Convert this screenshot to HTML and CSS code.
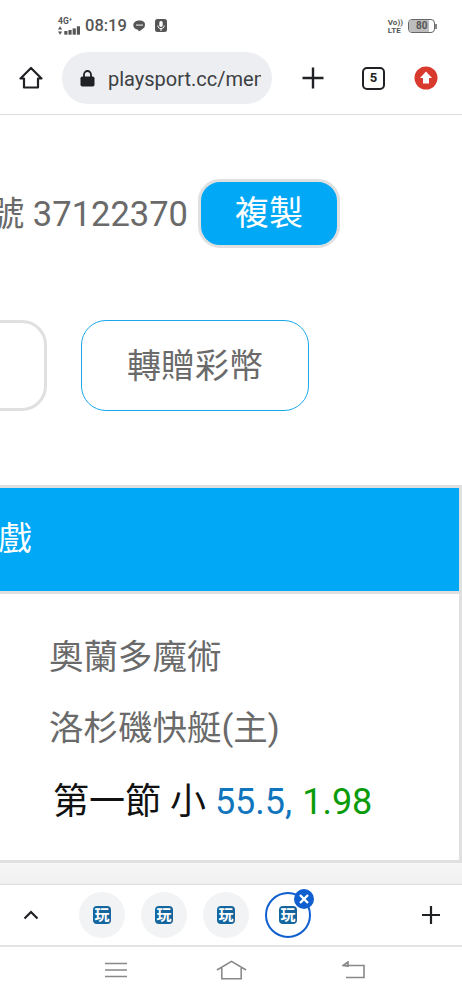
FILE: index.html
```html
<!DOCTYPE html>
<html>
<head>
    <title>playsport</title>
    <link rel="stylesheet" href="styles.css">
</head>
<body>
    <div class="status-bar">
        <div class="status-left">
            <div class="net">
                <span class="net-label">4G⁺</span>
                <svg width="22" height="9" viewBox="0 0 21 8"><path d="M2 0l2 3H0zM2 8L0 5h4z" fill="#555"/><rect x="6" y="4.500" width="3" height="3.500" fill="#555"/><rect x="10" y="3.500" width="3" height="4.500" fill="#555"/><rect x="14" y="2" width="3" height="6" fill="#555"/><rect x="18" y="0" width="3" height="8" fill="#555"/></svg>
            </div>
            <span class="clock">08:19</span>
            <svg class="line-icon" width="13" height="12" viewBox="0 0 13 12"><path d="M6.5 0.5C3 .5.3 2.6.3 5.2c0 2.3 2 4.200 4.800 4.600.5.100.3 1.200.6 1.500.4.200 3.300-1.700 4.700-3 1-.9 1.500-1.900 1.500-3.100C12.700 2.600 10 .5 6.500 .5z" fill="#555"/><rect x="3" y="4.500" width="7" height="1.200" fill="#ddd"/></svg>
            <svg class="mic-icon" width="12" height="13" viewBox="0 0 12 13"><rect width="12" height="13" rx="2.500" fill="#555"/><rect x="4.300" y="2" width="3.400" height="6" rx="1.700" fill="#fff"/><path d="M2.800 6.500c0 4.200 6.400 4.200 6.400 0M6 9.500V12" stroke="#fff" fill="none"/></svg>
        </div>
        <div class="status-right">
            <span class="volte">Vo))<br>LTE</span>
            <div class="battery"><div class="battery-fill"></div><span class="battery-num">80</span></div>
            <div class="battery-tip"></div>
        </div>
    </div>

    <div class="toolbar">
        <svg class="home-icon" width="24" height="24" viewBox="0 0 24 24"><path d="M12 2L1.500 12.500H5V21.500H19V12.500H22.500Z" fill="none" stroke="#202124" stroke-width="2.200" stroke-linejoin="round"/></svg>
        <div class="omnibox">
            <svg width="15" height="17" viewBox="0 0 15 17"><path d="M4 7V4.500a3.500 3.500 0 0 1 7 0V7" fill="none" stroke="#202124" stroke-width="1.800"/><rect x="0.500" y="6.500" width="14" height="10" rx="1.800" fill="#202124"/></svg>
            <span class="url">playsport.cc/member</span>
        </div>
        <svg class="plus-icon" width="24" height="24" viewBox="0 0 24 24"><path d="M12 1.500V22.500M1.500 12H22.500" stroke="#202124" stroke-width="2.400"/></svg>
        <div class="tab-count">5</div>
        <svg class="update-icon" width="24" height="24" viewBox="0 0 24 24"><circle cx="12" cy="12" r="11.500" fill="#d93a2e"/><path d="M12 5.500L18 12H15V17.500H9V12H6Z" fill="#fff"/></svg>
    </div>

    <div class="page">
        <div class="account-row">
            <span class="account-text">帳號 37122370</span>
            <div class="copy-btn">複製</div>
        </div>
        <div class="action-row">
            <div class="action-btn">購買彩幣</div>
            <div class="action-btn action-btn-blue">轉贈彩幣</div>
        </div>
        <div class="card">
            <div class="card-head"><span>我的遊戲</span></div>
            <div class="card-body">
                <div class="team">奧蘭多魔術</div>
                <div class="team">洛杉磯快艇(主)</div>
                <div class="bet">第一節 小 <span class="bet-line">55.5,</span><span class="bet-odds">1.98</span></div>
            </div>
        </div>
        <div class="page-foot"></div>
    </div>

    <div class="tab-strip">
        <svg class="chevron" width="16" height="10" viewBox="0 0 16 10"><path d="M1.500 8.500L8 2L14.500 8.500" fill="none" stroke="#202124" stroke-width="2.200"/></svg>
        <div class="tabs">
            <div class="tab"><span class="favicon">玩</span></div>
            <div class="tab"><span class="favicon">玩</span></div>
            <div class="tab"><span class="favicon">玩</span></div>
            <div class="tab tab-active">
                <span class="favicon">玩</span>
                <svg class="tab-close" width="20" height="20" viewBox="0 0 20 20"><circle cx="10" cy="10" r="10" fill="#0f5fd0"/><path d="M6 6L14 14M14 6L6 14" stroke="#fff" stroke-width="2.400"/></svg>
            </div>
        </div>
        <svg class="strip-plus" width="20" height="20" viewBox="0 0 20 20"><path d="M10 1V19M1 10H19" stroke="#202124" stroke-width="2.200"/></svg>
    </div>

    <div class="nav-bar">
        <svg width="22" height="16" viewBox="0 0 22 16"><path d="M0 1.500H22M0 8H22M0 14.500H22" stroke="#888" stroke-width="1.600"/></svg>
        <svg class="nav-home" width="31" height="20" viewBox="0 0 32 20"><path d="M1 10L16 1L31 10M6 8V19H26V8" fill="none" stroke="#888" stroke-width="1.600"/></svg>
        <svg class="nav-back" width="23" height="18" viewBox="0 0 23 18"><path d="M6 1L1 4.500L6 5zM4 4.500H22V16.500H4" fill="none" stroke="#888" stroke-width="1.600"/></svg>
    </div>
</body>
</html>
```

FILE: styles.css
```css
* {
    box-sizing: border-box;
}

body {
    margin: 0;
    width: 462px;
    height: 1000px;
    overflow: hidden;
    background: #fff;
    font-family: Roboto, "Noto Sans CJK TC", sans-serif;
    display: flex;
    flex-direction: column;
}

/* 狀態列 */
.status-bar {
    height: 52px;
    flex: none;
    display: flex;
    justify-content: space-between;
    padding: 16px 25px 0 58px;
    color: #555;
}

.status-left {
    display: flex;
    align-items: flex-start;
}

.net {
    width: 22px;
    margin-right: 5px;
    margin-top: 1px;
    display: flex;
    flex-direction: column;
}

.net-label {
    font-size: 8.500px;
    font-weight: 700;
    line-height: 9px;
}

.clock {
    font-size: 16.500px;
    font-weight: 500;
    line-height: 20px;
    margin-right: 6px;
}

.line-icon {
    margin-top: 4px;
    margin-right: 9px;
}

.mic-icon {
    margin-top: 3px;
}

.status-right {
    display: flex;
    align-items: flex-start;
}

.volte {
    font-size: 8px;
    font-weight: 700;
    line-height: 8px;
    margin-top: 3px;
    margin-right: 5px;
}

.battery {
    width: 27px;
    height: 14px;
    margin-top: 3px;
    border: 1px solid #666;
    border-radius: 4px;
    background: #fff;
    position: relative;
    overflow: hidden;
}

.battery-fill {
    width: 80%;
    height: 100%;
    background: #bdbdbd;
}

.battery-num {
    position: absolute;
    left: 7px;
    top: 0;
    font-size: 10px;
    font-weight: 700;
    line-height: 12px;
}

.battery-tip {
    width: 2px;
    height: 5px;
    margin-top: 8px;
    background: #888;
}

/* 瀏覽器工具列 */
.toolbar {
    height: 63px;
    flex: none;
    display: flex;
    align-items: flex-start;
    border-bottom: 1px solid #dcdcdc;
    padding-left: 19px;
}

.home-icon {
    margin-top: 14px;
    flex: none;
}

.omnibox {
    width: 210px;
    height: 52px;
    flex: none;
    margin-left: 19px;
    border-radius: 26px;
    background: #eceef1;
    display: flex;
    align-items: center;
    padding-left: 18px;
    padding-right: 11px;
    overflow: hidden;
}

.omnibox svg {
    flex: none;
}

.url {
    margin-left: 13px;
    margin-top: 2px;
    font-size: 20px;
    color: #3c4043;
    white-space: nowrap;
    overflow: hidden;
}

.plus-icon {
    margin-top: 14px;
    margin-left: 29px;
    flex: none;
}

.tab-count {
    width: 23px;
    height: 23px;
    margin-top: 15px;
    margin-left: 37px;
    border: 2.500px solid #202124;
    border-radius: 5px;
    font-size: 13px;
    font-weight: 700;
    line-height: 18px;
    text-align: center;
    color: #202124;
}

.update-icon {
    margin-top: 14px;
    margin-left: 29px;
    flex: none;
}

/* 頁面內容 */
.page {
    height: 769px;
    flex: none;
    overflow: hidden;
    background: #fff;
    padding-top: 64px;
    display: flex;
    flex-direction: column;
}

.account-row {
    height: 69px;
    flex: none;
    display: flex;
    justify-content: flex-end;
    align-items: center;
    padding-right: 122px;
    white-space: nowrap;
}

.account-text {
    font-size: 34.500px;
    line-height: 68px;
    color: #6a6a6a;
    margin-right: 10px;
}

.copy-btn {
    width: 142px;
    height: 69px;
    flex: none;
    border: 3px solid #e0e0e0;
    border-radius: 22px;
    background: #00a8f6;
    color: #fff;
    font-size: 34px;
    line-height: 63px;
    text-align: center;
}

.action-row {
    margin-top: 72px;
    height: 91px;
    flex: none;
    display: flex;
    justify-content: flex-end;
    gap: 34px;
    padding-right: 153px;
}

.action-btn {
    width: 228px;
    height: 91px;
    flex: none;
    border: 3px solid #e0e0e0;
    border-radius: 25px;
    font-size: 34px;
    line-height: 85px;
    text-align: center;
    color: #6a6a6a;
}

.action-btn-blue {
    border: 1.500px solid #18a8ea;
    line-height: 90px;
}

.card {
    margin-top: 74px;
    height: 378px;
    flex: none;
    border: 3px solid #e0e0e0;
    border-left: none;
}

.card-head {
    height: 103px;
    background: #00a8f6;
    color: #fff;
    font-size: 33.500px;
    line-height: 101px;
    display: flex;
    margin-left: -102px;
    white-space: nowrap;
}

.card-body {
    border-top: 3px solid #e0e0e0;
    padding: 38px 0 0 49px;
}

.team {
    font-size: 34.500px;
    line-height: 50px;
    margin-bottom: 21px;
    color: #6a6a6a;
}

.bet {
    margin-top: 24px;
    margin-left: 4px;
    font-size: 36px;
    line-height: 50px;
    color: #111;
}

.bet-line {
    color: #0f75bc;
}

.bet-odds {
    margin-left: 10px;
    color: #0a9b0a;
}

/* 卡片下方的灰色區塊 */
.page-foot {
    flex: 1;
    background: linear-gradient(#f6f6f6, #f0f0f0);
}

/* 分頁列 */
.tab-strip {
    height: 63px;
    flex: none;
    display: flex;
    align-items: center;
    background: #fff;
    border-top: 1px solid #ddd;
    border-bottom: 2px solid #e4e4e4;
    padding-left: 23px;
}

.chevron {
    flex: none;
}

.tabs {
    display: flex;
    gap: 16px;
    margin-left: 40px;
}

.tab {
    width: 46px;
    height: 46px;
    border-radius: 50%;
    background: #f1f3f4;
    display: flex;
    align-items: center;
    justify-content: center;
    position: relative;
}

.tab-active {
    background: #fff;
    border: 2.500px solid #0f5fd0;
}

.favicon {
    width: 18px;
    height: 18px;
    border-radius: 4px;
    background: #15669e;
    color: #fff;
    font-size: 15px;
    font-weight: 700;
    line-height: 18px;
    text-align: center;
}

.tab-close {
    position: absolute;
    top: -5px;
    right: -5px;
}

.strip-plus {
    margin-left: 110px;
    flex: none;
}

/* 系統導覽列 */
.nav-bar {
    height: 53px;
    flex: none;
    display: flex;
    align-items: center;
    padding: 0 0 7px 105px;
}

.nav-home {
    margin-left: 89px;
}

.nav-back {
    margin-left: 95px;
}
```
